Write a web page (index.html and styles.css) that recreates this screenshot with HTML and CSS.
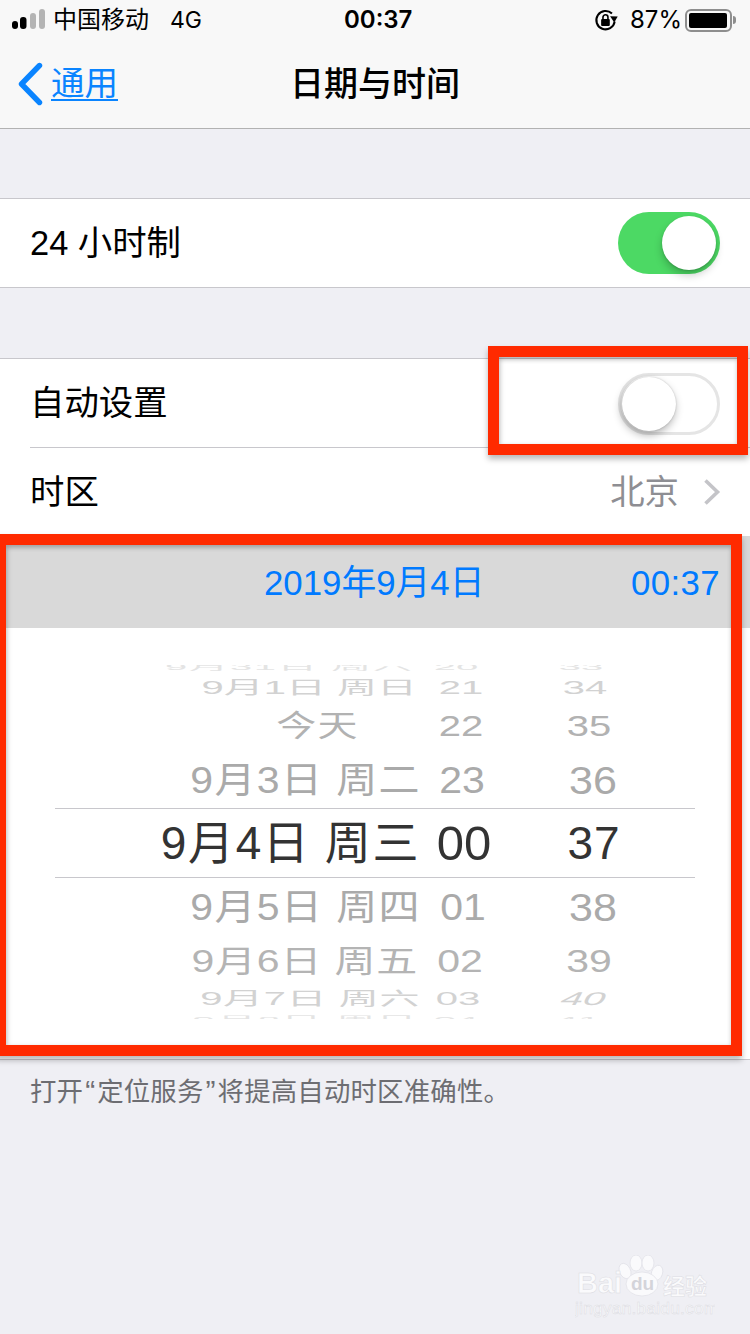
FILE: index.html
```html
<!DOCTYPE html>
<html lang="zh-CN">
<head>
<meta charset="utf-8">
<title>日期与时间</title>
<link rel="stylesheet" href="styles.css">
</head>
<body>
<div class="screen">
  <header class="top">
    <div class="status">
      <svg class="signal" width="36" height="24" viewBox="0 0 36 24"><rect x="0" y="13" width="6" height="8" rx="3" fill="#000"/><rect x="8" y="9" width="6.5" height="12" rx="3" fill="#000"/><rect x="18" y="5" width="6" height="16" rx="3" fill="#b4b4b4"/><rect x="27" y="1" width="6" height="20" rx="3" fill="#b4b4b4"/></svg>
      <span class="carrier">中国移动</span>
      <span class="net">4G</span>
      <span class="clock">00:37</span>
      <svg class="lock" width="26" height="26" viewBox="0 0 24 24"><path d="M20 13.5A8.5 8.5 0 1 1 17.5 6" fill="none" stroke="#000" stroke-width="1.9"/><path d="M15.8 8.6l7 .2-3.2 5.4z" fill="#000"/><rect x="7.5" y="11" width="8" height="6.5" rx="1" fill="#000"/><path d="M9.2 11.5V9.5a2.3 2.3 0 0 1 4.6 0v2" fill="none" stroke="#000" stroke-width="1.5"/></svg>
      <span class="pct">87%</span>
      <span class="battery"><span class="level"></span></span>
      <span class="nub"></span>
    </div>
    <nav class="nav">
      <a class="back">
        <svg width="26" height="44" viewBox="0 0 26 44"><path d="M22.5 3.5L4.5 22l18 18.5" fill="none" stroke="#0a84ff" stroke-width="5.4" stroke-linecap="round" stroke-linejoin="round"/></svg>
        <span class="back-text">通用</span>
      </a>
      <h1 class="title">日期与时间</h1>
    </nav>
  </header>

  <section class="group group-first">
    <div class="row">
      <span class="label">24 小时制</span>
      <span class="switch switch-on"><span class="thumb"></span></span>
    </div>
  </section>

  <section class="group group-second">
    <div class="row row-sep">
      <span class="label">自动设置</span>
      <span class="switch switch-off"><span class="thumb"></span></span>
    </div>
    <div class="row">
      <span class="label">时区</span>
      <span class="value">北京</span>
      <svg class="chev" width="18" height="28" viewBox="0 0 18 28"><path d="M2.5 2.5L14.5 14 2.5 25.5" fill="none" stroke="#c4c4c8" stroke-width="3.6"/></svg>
    </div>
    <div class="band">
      <span class="band-date">2019年9月4日</span>
      <span class="band-time">00:37</span>
    </div>
    <div class="picker">
      <div class="wheel">
        <div class="w w0"><span class="d">9月31日 周六</span><span class="h">20</span><span class="m">33</span></div>
        <div class="w w1"><span class="d">9月1日 周日</span><span class="h">21</span><span class="m">34</span></div>
        <div class="w w2"><span class="d">今天</span><span class="h">22</span><span class="m">35</span></div>
        <div class="w w3"><span class="d">9月3日 周二</span><span class="h">23</span><span class="m">36</span></div>
        <div class="w w4"><span class="d">9月4日 周三</span><span class="h">00</span><span class="m">37</span></div>
        <div class="w w5"><span class="d">9月5日 周四</span><span class="h">01</span><span class="m">38</span></div>
        <div class="w w6"><span class="d">9月6日 周五</span><span class="h">02</span><span class="m">39</span></div>
        <div class="w w7"><span class="d">9月7日 周六</span><span class="h">03</span><span class="m">40</span></div>
        <div class="w w8"><span class="d">9月8日 周日</span><span class="h">04</span><span class="m">41</span></div>
      </div>
    </div>
  </section>

  <p class="note">打开<span class="q">“</span>定位服务<span class="q">”</span>将提高自动时区准确性。</p>

  <div class="mark mark-switch"></div>
  <div class="mark mark-picker"></div>

  <svg class="watermark" width="140" height="70" viewBox="0 0 140 70">
    <g fill="#fafafc" stroke="#e2e2e8" stroke-width=".8">
      <ellipse cx="50" cy="16" rx="5.5" ry="8" transform="rotate(-25 50 16)"/>
      <ellipse cx="61" cy="8" rx="6" ry="8"/>
      <ellipse cx="73" cy="8" rx="6" ry="8"/>
      <ellipse cx="82" cy="18" rx="5.5" ry="8" transform="rotate(20 82 18)"/>
      <ellipse cx="67" cy="29" rx="16" ry="12"/>
    </g>
    <text class="wm-bai" x="2" y="38">Bai</text>
    <text class="wm-du" x="56" y="35">du</text>
    <text class="wm-jy" x="88" y="39">经验</text>
    <text class="wm-url" x="0" y="59">jingyan.baidu.com</text>
  </svg>
</div>
</body>
</html>
```

FILE: styles.css
```css
* { box-sizing: border-box; }
html, body { margin: 0; padding: 0; }
body {
  width: 750px;
  height: 1334px;
  overflow: hidden;
  background: #efeff4;
  font-family: "Liberation Sans", "Noto Sans CJK SC", sans-serif;
  color: #000;
}
.screen { position: relative; width: 750px; height: 1334px; overflow: hidden; background: #efeff4; }

.top { height: 129px; background: #f8f8f8; border-bottom: 1px solid #b2b2b2; }
.status { display: flex; align-items: center; height: 40px; padding-left: 12px; font-size: 24px; line-height: 40px; }
.signal { flex: none; }
.carrier { margin-left: 5px; width: 117px; }
.net { width: 174px; font-family: "Inter", "Liberation Sans", sans-serif; font-size: 23px; }
.clock { width: 249px; font-family: "Inter", "Liberation Sans", sans-serif; font-weight: 600; font-size: 24px; }
.lock { flex: none; }
.pct { margin-left: 11px; width: 55px; font-family: "Inter", "Liberation Sans", sans-serif; font-size: 24px; }
.battery { display: block; width: 47px; height: 23px; border: 2px solid #8e8e8e; border-radius: 6px; padding: 2px; }
.level { display: block; height: 100%; width: 38px; background: #000; border-radius: 2px; }
.nub { display: block; width: 3px; height: 8px; margin-left: 1px; background: #8e8e8e; border-radius: 0 3px 3px 0; }

.nav { position: relative; display: flex; align-items: center; justify-content: center; height: 88px; }
.back { position: absolute; left: 17px; top: 0; height: 88px; display: flex; align-items: center; color: #0a84ff; }
.back-text { margin-left: 8px; font-size: 33.5px; line-height: 1.2; text-decoration: underline; text-underline-offset: 4px; text-decoration-thickness: 2px; }
.title { margin: 0; font-size: 34px; font-weight: 500; line-height: 1; }

.group { background: #fff; border-top: 1px solid #c8c7cc; border-bottom: 1px solid #c8c7cc; }
.group-first { margin-top: 69px; }
.group-second { margin-top: 70px; }
.row { position: relative; display: flex; align-items: center; height: 88px; padding: 0 30px; background: #fff; }
.row-sep { height: 89px; padding-bottom: 2px; }
.row-sep::after { content: ""; position: absolute; left: 30px; right: 0; bottom: 0; height: 1px; background: #c8c7cc; }
.label { flex: 1; font-size: 34.4px; line-height: 1; color: #000; padding-top: 1px; }
.value { font-size: 34.4px; line-height: 1; color: #8e8e93; padding-top: 1px; }
.chev { margin-left: 23px; flex: none; transform: translateX(1px); }

.switch { position: relative; display: block; flex: none; width: 102px; height: 62px; border-radius: 31px; }
.switch .thumb { position: absolute; top: 4px; width: 54px; height: 54px; border-radius: 50%; background: #fff; }
.switch-on { background: #4cd964; }
.switch-on .thumb { left: 44px; box-shadow: 0 5px 8px rgba(0,0,0,.22), 0 1px 2px rgba(0,0,0,.15); }
.switch-off { background: #fff; border: 3px solid #e5e5e5; margin-top: 2px; }
.switch-off .thumb { left: 1px; top: 1px; box-shadow: -1px 4px 8px rgba(0,0,0,.3), 0 0 2px rgba(0,0,0,.2); }

.band { display: flex; height: 92px; align-items: center; background: #d9d9d9; color: #007aff; font-size: 34.8px; line-height: 1; padding-top: 2px; }
.band-date { margin-left: 264px; }
.band-time { margin-left: auto; margin-right: 30px; letter-spacing: .4px; }

.picker { height: 431px; padding-top: 37px; background: #fff; }
.wheel { height: 354px; overflow: hidden; }
.w { display: grid; grid-template-rows: 100%; align-items: center; white-space: nowrap; line-height: 1; font-size: 41px; color: #aaa; }
.w span { display: block; }
.d { text-align: right; letter-spacing: 1.4px; margin-right: -1px; }
.h, .m { text-align: center; }

.w0 { height: 18px; margin-top: -7px; grid-template-columns: 413px 86px 164px; color: #e4e4e4; font-size: 40px; }
.w0 span { transform: scaleY(.22); }
.w1 { height: 24px; grid-template-columns: 416px 90px 158px; color: #d2d2d2; font-size: 40px; }
.w1 span { transform: scaleY(.46); }
.w1 .d { letter-spacing: 0; }
.w2 { height: 52px; grid-template-columns: 358px 206px 50px; color: #b2b2b2; font-size: 40px; }
.w2 span { transform: scaleY(.74); }
.w3 { height: 56px; grid-template-columns: 420px 84px 178px; }
.w3 span { transform: scaleY(.9); }
.w3 .m, .w5 .m { font-size: 43px; }
.w4 { height: 70px; margin: 0 55px; grid-template-columns: 364px 90px 170px; border-top: 1px solid #c8c7cc; border-bottom: 1px solid #c8c7cc; font-size: 46px; color: #333; }
.w4 .d { letter-spacing: 1.6px; }
.w4 .h { font-size: 49px; }
.w4 .m { letter-spacing: 1px; }
.w5 { height: 58px; grid-template-columns: 420px 86px 174px; }
.w5 span { transform: scaleY(.9); }
.w6 { height: 50px; grid-template-columns: 417px 86px 172px; color: #b4b4b4; }
.w6 span { transform: scaleY(.76); }
.w6 .d { letter-spacing: .8px; }
.w7 { height: 26px; grid-template-columns: 419px 78px 174px; color: #d2d2d2; font-size: 40px; }
.w7 span { transform: scaleY(.46); }
.w7 .d { letter-spacing: .6px; }
.w7 .m { transform: scaleY(.46) skewX(-14deg); }
.w8 { height: 16px; grid-template-columns: 417px 78px 166px; color: #e4e4e4; font-size: 40px; }
.w8 span { transform: scaleY(.22); }

.note { margin: 13px 0 0; padding-left: 30px; font-family: "Noto Sans CJK SC", sans-serif; font-size: 26.4px; letter-spacing: .2px; line-height: 34px; color: #6d6d72; }
.q { font-family: "Liberation Sans", sans-serif; font-size: 30px; line-height: 1; letter-spacing: 0; padding: 0 2px; }

.mark { position: absolute; border: 11px solid #ff2a00; box-shadow: 0 4px 6px rgba(0,0,0,.28), inset 0 3px 4px rgba(0,0,0,.22), inset 3px 0 4px rgba(0,0,0,.08); }
.mark-switch { left: 488px; top: 346px; width: 260px; height: 109px; }
.mark-picker { left: -5px; top: 534px; width: 747px; height: 522px; }

.watermark { position: absolute; left: 575px; top: 1255px; }
.watermark text { fill: #fafafc; stroke: #dcdce2; stroke-width: .5px; }
.wm-bai { font-family: "Liberation Sans", sans-serif; font-weight: 700; font-size: 29px; }
.wm-du { font-family: "Liberation Sans", sans-serif; font-weight: 700; font-size: 19px; }
.watermark .wm-du { fill: #d4d4da; stroke: none; }
.wm-jy { font-family: "Noto Sans CJK SC", sans-serif; font-weight: 700; font-size: 22px; }
.wm-url { font-family: "Liberation Sans", sans-serif; font-size: 17.4px; letter-spacing: .2px; }
```
